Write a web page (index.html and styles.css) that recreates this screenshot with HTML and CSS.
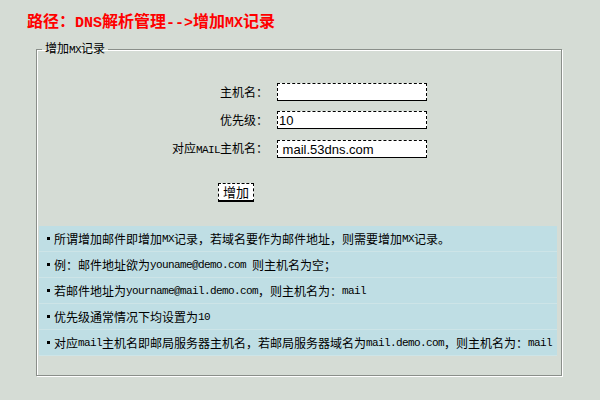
FILE: index.html
```html
<!DOCTYPE html>
<html lang="zh-CN">
<head>
<meta charset="utf-8">
<title>增加MX记录</title>
<link rel="stylesheet" href="styles.css">
</head>
<body>
<h1 class="path">路径：<span class="en">DNS</span>解析管理<span class="en">--&gt;</span>增加<span class="en">MX</span>记录</h1>
<fieldset class="box">
  <legend class="box-title">增加<span class="en">MX</span>记录</legend>
  <form class="form">
    <label class="label" for="host">主机名：</label>
    <input class="field" id="host" type="text" value="">
    <label class="label" for="prio">优先级：</label>
    <input class="field" id="prio" type="text" value="10">
    <label class="label" for="mail">对应<span class="en">MAIL</span>主机名：</label>
    <input class="field" id="mail" type="text" value=" mail.53dns.com">
    <div class="actions"><button class="btn" type="button">增加</button></div>
  </form>
  <ul class="tips">
    <li class="tip">所谓增加邮件即增加<span class="en">MX</span>记录，若域名要作为邮件地址，则需要增加<span class="en">MX</span>记录。</li>
    <li class="tip">例：邮件地址欲为<span class="en">youname@demo.com&nbsp;</span>则主机名为空；</li>
    <li class="tip">若邮件地址为<span class="en">yourname@mail.demo.com</span>，则主机名为：<span class="en">mail</span></li>
    <li class="tip">优先级通常情况下均设置为<span class="en">10</span></li>
    <li class="tip">对应<span class="en">mail</span>主机名即邮局服务器主机名，若邮局服务器域名为<span class="en">mail.demo.com</span>，则主机名为：<span class="en">mail</span></li>
  </ul>
</fieldset>
</body>
</html>
```
FILE: styles.css
```css
html, body {
  margin: 0;
  padding: 0;
  background: #d5dcd5;
}
body {
  width: 600px;
  height: 400px;
  overflow: hidden;
  font-family: "Noto Sans CJK SC", sans-serif;
  font-size: 12px;
  color: #000;
}
.en {
  font-family: "Liberation Mono", monospace;
  font-size: 11px;
  letter-spacing: -0.6px;
}
.path {
  margin: 0;
  padding: 12px 0 0 27px;
  font-size: 16px;
  line-height: 16px;
  font-weight: bold;
  color: #ff0000;
  white-space: nowrap;
}
.path .en {
  font-size: 15px;
  letter-spacing: 0;
  font-weight: bold;
}
.box {
  box-sizing: border-box;
  margin: 9px 0 0 36px;
  width: 526px;
  height: 335px;
  padding: 0 4px 0 2px;
  border: 1px solid #8a8f8a;
  box-shadow: inset 1px 1px 0 #fff, 1px 1px 0 #fff;
  min-width: 0;
}
.box-title {
  margin-left: 3px;
  padding: 0 3px;
  font-size: 12px;
  line-height: 14px;
  white-space: nowrap;
}
.form {
  display: grid;
  grid-template-columns: 229px 150px;
  column-gap: 9px;
  row-gap: 10px;
  align-items: center;
  margin: 26px 0 0 0;
}
.label {
  text-align: right;
  line-height: 18px;
  white-space: nowrap;
}
.field {
  box-sizing: border-box;
  width: 150px;
  height: 18px;
  margin: 0;
  padding: 0 0 0 1px;
  border: 1px dashed #000;
  border-bottom: 1px solid #000;
  background: #fff;
  font-family: "Liberation Sans", Arial, sans-serif;
  font-size: 13px;
  line-height: 16px;
  color: #000;
  outline: none;
}
.actions {
  grid-column: 1 / -1;
  display: flex;
  justify-content: center;
  margin-top: 14px;
  padding-left: 6px;
}
.btn {
  box-sizing: border-box;
  width: 36px;
  height: 19px;
  margin: 0;
  padding: 0;
  border: 1px dashed #000;
  border-bottom: 2px solid #000;
  background: #fff;
  font-family: "Noto Sans CJK SC", sans-serif;
  font-size: 13px;
  line-height: 14px;
  color: #000;
}
.tips {
  list-style: none;
  margin: 24px 0 0 0;
  padding: 0 0 1px 0;
  width: 518px;
  display: flex;
  flex-direction: column;
  gap: 1px;
  background: #cde4e7;
}
.tip {
  height: 25px;
  display: flex;
  align-items: center;
  padding-left: 8px;
  background: #bfdee4;
  line-height: 14px;
  white-space: nowrap;
}
.tip::before {
  content: "";
  width: 3px;
  height: 3px;
  background: #000;
  margin-right: 4px;
  flex: none;
}
```
